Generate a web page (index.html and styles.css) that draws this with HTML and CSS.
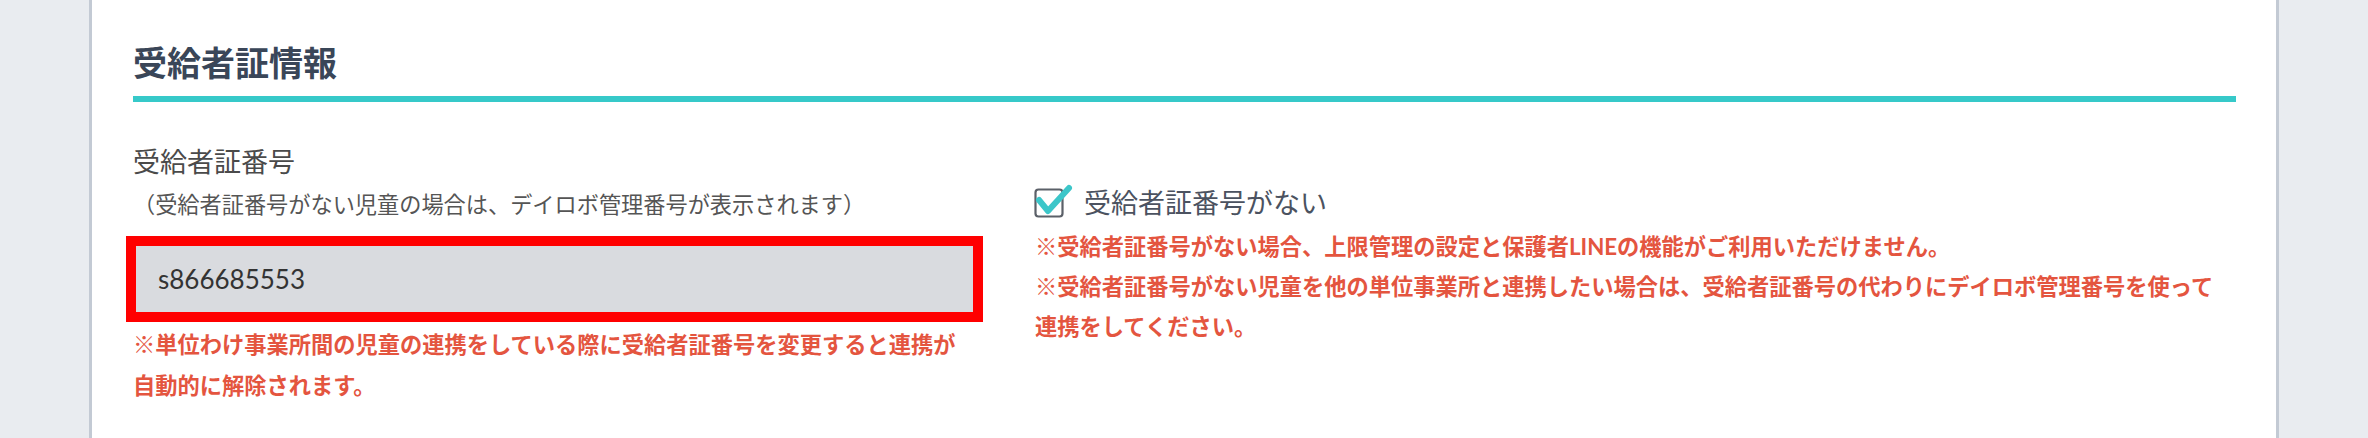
FILE: index.html
```html
<!DOCTYPE html>
<html lang="ja">
<head>
<meta charset="utf-8">
<title>受給者証情報</title>
<link rel="stylesheet" href="styles.css">
</head>
<body>
<div class="page">
  <section class="panel">
    <h2 class="section-title">受給者証情報</h2>
    <div class="form-row">
      <div class="col-left">
        <div class="field-label">受給者証番号</div>
        <div class="field-hint">（受給者証番号がない児童の場合は、デイロボ管理番号が表示されます）</div>
        <div class="input-highlight">
          <div class="input-box">s866685553</div>
        </div>
        <p class="warn warn-left">※単位わけ事業所間の児童の連携をしている際に受給者証番号を変更すると連携が自動的に解除されます。</p>
      </div>
      <div class="col-right">
        <label class="check-row">
          <svg class="check-icon" width="40" height="34" viewBox="0 0 40 34">
            <rect x="1.5" y="5.5" width="27" height="27" rx="3" ry="3" fill="none" stroke="#5b6068" stroke-width="2.2"/>
            <path d="M5 16 L14 27 L35 4" fill="none" stroke="#3cc6c9" stroke-width="6" stroke-linecap="round" stroke-linejoin="round"/>
          </svg>
          <span class="check-label">受給者証番号がない</span>
        </label>
        <p class="warn warn-right warn-first">※受給者証番号がない場合、上限管理の設定と保護者LINEの機能がご利用いただけません。</p>
        <p class="warn warn-right">※受給者証番号がない児童を他の単位事業所と連携したい場合は、受給者証番号の代わりにデイロボ管理番号を使って連携をしてください。</p>
      </div>
    </div>
  </section>
</div>
</body>
</html>
```

FILE: styles.css
```css
html, body {
  margin: 0;
  padding: 0;
}

body {
  background: #e9ecf0;
  font-family: Lato, "Noto Sans CJK JP", "Noto Sans", sans-serif;
  color: #4a4a4a;
}

.page {
  height: 438px;
  overflow: hidden;
  padding: 0 89px;
}

.panel {
  background: #ffffff;
  border-left: 3px solid #c3cad4;
  border-right: 3px solid #c3cad4;
  height: 438px;
  box-sizing: border-box;
  padding: 0 40px 0 41px;
}

.section-title {
  margin: 0;
  padding-top: 38px;
  padding-bottom: 8px;
  font-size: 34px;
  line-height: 50px;
  font-weight: 700;
  color: #3a4658;
  border-bottom: 6px solid #36c9c9;
}

.form-row {
  display: grid;
  grid-template-columns: 840px 1fr;
  column-gap: 62px;
  padding-top: 40px;
}

.field-label {
  font-size: 27px;
  line-height: 40px;
  color: #4a4a4a;
}

.field-hint {
  margin-top: 8px;
  font-size: 22.2px;
  line-height: 30px;
  color: #555555;
  white-space: nowrap;
}

.input-highlight {
  margin-top: 16px;
  margin-left: -7px;
  width: 857px;
  box-sizing: border-box;
  border: 10px solid #ff0000;
}

.input-box {
  height: 66px;
  background: #d9dbdf;
  padding-left: 22px;
  font-size: 26px;
  line-height: 66px;
  color: #333333;
}

.warn {
  margin: 0;
  font-size: 22.25px;
  font-weight: 700;
  color: #e4553f;
}

.warn-left {
  margin-top: 2px;
  max-width: 835px;
  line-height: 41px;
}

.col-right {
  padding-top: 41px;
}

.check-row {
  display: flex;
  align-items: center;
  height: 40px;
}

.check-icon {
  display: block;
  margin-left: -1px;
  margin-top: -4px;
}

.check-label {
  margin-left: 10px;
  font-size: 27px;
  line-height: 40px;
  color: #4b5260;
}

.warn-right {
  max-width: 1190px;
  line-height: 40px;
}

.warn-first {
  margin-top: 4px;
}
```
